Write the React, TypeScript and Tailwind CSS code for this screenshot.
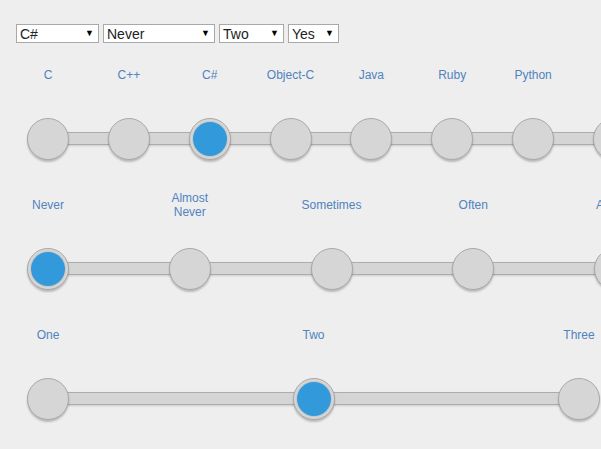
import { Fragment } from "react";

type SliderRowProps = {
    labels: string[];
    selected: number;
    width: number;
};

const dropdowns = [
    { value: "C#", width: "w-[83px]" },
    { value: "Never", width: "w-[112px]" },
    { value: "Two", width: "w-[65px]" },
    { value: "Yes", width: "w-[51px]" },
];

function Dropdown({ value, width }: { value: string; width: string }) {
    return (
        <div
            className={`${width} h-[19px] flex items-center justify-between bg-white border border-[#a9a9a9] pl-[3px] pr-[4px] text-[14px] leading-none text-[#222]`}
        >
            <span>{value}</span>
            <span className="text-[9px] text-black">▼</span>
        </div>
    );
}

function SliderRow(props: SliderRowProps) {
    const { labels, selected, width } = props;

    return (
        <div className="relative h-[130px] ml-[27px]" style={{ width }}>
            {/* track */}
            <div className="absolute left-[21px] right-[21px] top-[73px] h-[13px] bg-[#d5d5d5] border-y border-[#acacac] shadow-[0_1px_2px_rgba(0,0,0,0.15)]" />

            <div className="relative flex justify-between">
                {labels.map((label, key) => (
                    <div key={key} className="w-[42px] flex flex-col items-center">
                        <div className="h-[30px] pt-[2px] flex items-center justify-center whitespace-nowrap text-center text-[12px] leading-[14px] text-[#5083be]">
                            {label.split("\n").map((line, i) => (
                                <Fragment key={i}>
                                    {i > 0 && <br />}
                                    {line}
                                </Fragment>
                            ))}
                        </div>
                        <div className="mt-[29px] w-[42px] h-[42px] shrink-0 rounded-full bg-[#d6d6d6] border border-[#a9a9a9] shadow-[0_2px_2px_rgba(0,0,0,0.22)] flex items-center justify-center">
                            {key === selected && (
                                <div className="w-[34px] h-[34px] rounded-full bg-[#3299db] shadow-[0_0_0_1px_#c8c8c8]" />
                            )}
                        </div>
                    </div>
                ))}
            </div>
        </div>
    );
}

export default function App() {
    return (
        <div
            className="min-h-screen w-full overflow-hidden bg-[#eeeeee]"
            style={{ fontFamily: '"Liberation Sans", Arial, sans-serif' }}
        >
            <div className="flex gap-[4px] pl-[16px] pt-[24px] h-[59px]">
                {dropdowns.map((d, key) => (
                    <Dropdown key={key} value={d.value} width={d.width} />
                ))}
            </div>

            <SliderRow
                labels={["C", "C++", "C#", "Object-C", "Java", "Ruby", "Python", ""]}
                selected={2}
                width={608}
            />
            <SliderRow
                labels={["Never", "Almost\nNever", "Sometimes", "Often", "Always"]}
                selected={0}
                width={609}
            />
            <SliderRow labels={["One", "Two", "Three"]} selected={1} width={573} />
        </div>
    );
}
